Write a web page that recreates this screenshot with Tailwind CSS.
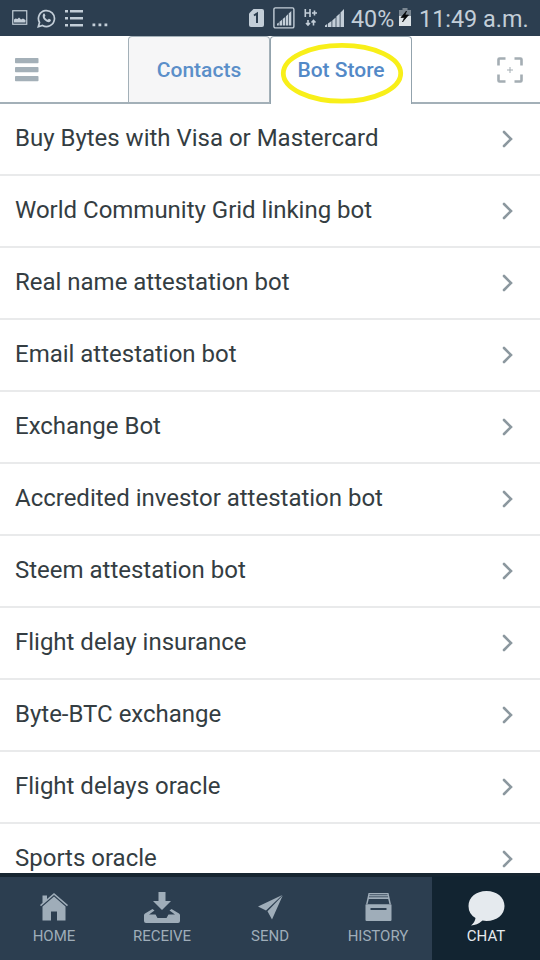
<!DOCTYPE html>
<html lang="en">
<head>
<meta charset="utf-8">
<title>Bot Store</title>
<script src="https://cdn.jsdelivr.net/npm/@tailwindcss/browser@4"></script>
</head>
<body class="bg-white">
<div class="w-[540px] h-[960px] overflow-hidden flex flex-col bg-white font-[Roboto,sans-serif]">
  <div class="h-9 shrink-0 bg-[#2c3e50] text-[#c3ced8] flex items-center justify-between pl-3 pr-3">
    <div class="flex items-center">
      <svg class="w-4 h-4" viewBox="0 0 16 16"><rect x=".75" y=".75" width="14" height="13.5" fill="none" stroke="currentColor" stroke-width="1.2"/><path d="M2 12.500V9.500l1.500-1 2 .5 1.500-1.500 2 2 2-1 2.500 1.500v2.500z" fill="currentColor"/></svg>
      <svg class="w-[19px] h-[19px] ml-[9px]" viewBox="0 0 19 19"><path d="M1.300 17.700L2.500 13.500A8 8 0 1 1 5.500 16.500Z" fill="none" stroke="currentColor" stroke-width="1.700"/><path d="M6.200 5c.6-.7 1.300-.5 1.500 0l.7 1.600c.1.400-.5 1-.7 1.300.7 1.400 1.700 2.300 3.100 2.900.4-.3.900-1.100 1.300-1l1.700.9c.3.300 0 1.600-.8 2.100-1.200.8-3.300.2-5.200-1.500C5.900 9.600 5 7 6.200 5z" fill="currentColor"/></svg>
      <svg class="w-[18px] h-[18px] ml-[9px]" viewBox="0 0 18 18" fill="currentColor"><path d="M0 1h3v2.500H0zM5 1h13v2.500H5zM0 8h3v2.500H0zM5 8h13v2.500H5zM0 15h3v2.500H0zM5 15h13v2.500H5z"/></svg>
      <svg class="w-4 h-4 ml-[9px] mt-[2px]" viewBox="0 0 16 16" fill="currentColor"><path d="M.5 12.500h2.800v2.800H.5zM6.500 12.500h2.800v2.800H6.500zM12.500 12.500h2.800v2.800h-2.800z"/></svg>
    </div>
    <div class="flex items-center">
      <svg class="w-[15px] h-[18px]" viewBox="0 0 15 18"><path d="M4.500 0H13q2 0 2 2v14q0 2-2 2H2q-2 0-2-2V4.500z" fill="currentColor"/><path d="M5 6.500L8 4.500V14" fill="none" stroke="#2c3e50" stroke-width="2"/></svg>
      <svg class="w-[22px] h-[22px] ml-[9px]" viewBox="0 0 22 22"><rect x=".9" y=".9" width="20" height="20" rx="1.500" fill="none" stroke="currentColor" stroke-width="1.400"/><path d="M4 18.500v-1.800l1.800-1.300v3.100zM6.500 18.500v-3.700l2.500-2v5.700zM9.700 18.500v-6.400l2.500-2.200v8.600zM12.900 18.500V9.300l2.100-2v11.200zM15.700 18.500V6.500l2.600-2.500v14.500z" fill="currentColor"/></svg>
      <svg class="w-[14px] h-[18px] ml-[9px]" viewBox="0 0 14 18" fill="none" stroke="currentColor" stroke-width="1.600"><path d="M1.300 0v8M6 0v8M1.300 4H6M8 4h5M10.500 1.500v5M4 11v5M2 14l2 2 2-2M9.500 16.500v-5M7.500 13.500l2-2 2 2"/></svg>
      <svg class="w-[19px] h-[18px] ml-[7px]" viewBox="0 0 19 18" fill="currentColor"><path d="M0 18v-1.500L2.200 15v3zM3 18v-3.500L6.500 12v6zM7.300 18v-6.500L10.600 8.500V18zM11.400 18V7.500l3.300-3V18zM15.500 18V3.500L19 0v18z"/></svg>
      <span class="ml-[7px] w-[43px] text-[23.3px] leading-9 whitespace-nowrap pt-[2px]">40%</span>
      <svg class="w-[12px] h-[18px] ml-[5px] mb-[2px]" viewBox="0 0 12 18"><path d="M3.500 0h5v2H12v6H0V2h3.500z" fill="#7b8792"/><path d="M0 8h12v10H0z" fill="#dce2e6"/><path d="M7.500 3L2 9.500h3.500L3.500 14l6-7H6z" fill="#050709" stroke="#050709" stroke-width=".7"/></svg>
      <span class="ml-2 w-[109px] text-[23.4px] leading-9 whitespace-nowrap pt-[2px]">11:49 a.m.</span>
    </div>
  </div>

  <div class="h-[68px] shrink-0 flex justify-between relative">
    <div class="w-32 h-[68px] border-b-2 border-[#a3b0b8] pl-[15px] pt-[22px]">
      <svg class="w-6 h-6" viewBox="0 0 24 24" fill="#a4b0b8"><rect width="23.500" height="5.300" rx=".8"/><rect y="9" width="23.500" height="5.300" rx=".8"/><rect y="18" width="23.500" height="5.300" rx=".8"/></svg>
    </div>
    <div class="w-[142px] h-[68px] border border-b-2 border-[#a3b0b8] rounded-t-[4px] bg-[#f6f6f7] text-center text-[21px] font-medium leading-[66px] text-[#5b8fc9]"><span>Contacts</span></div>
    <div class="w-[142px] h-[68px] border border-b-0 border-[#93a3ad] rounded-t-[4px] text-center text-[21px] font-medium leading-[66px] text-[#5389c7]"><span>Bot Store</span></div>
    <div class="w-32 h-[68px] border-b-2 border-[#a3b0b8] pl-[85px] pt-[21px]">
      <svg class="w-[26px] h-[26px]" viewBox="0 0 26 26" fill="none" stroke="#a4adb3"><path d="M1.500 8.500v-6q0-1 1-1h6M17.500 1.500h6q1 0 1 1v6M24.500 17.500v6q0 1-1 1h-6M8.500 24.500h-6q-1 0-1-1v-6" stroke-width="2.600"/><path d="M13 10v6M10 13h6"/></svg>
    </div>
    <svg class="absolute left-[280px] top-[5px] w-[125px] h-[64px]" viewBox="0 0 125 64"><ellipse cx="62" cy="32.300" rx="58.700" ry="27.900" fill="none" stroke="#f8ef19" stroke-width="4.800"/></svg>
  </div>

  <div id="list" class="flex-1 min-h-0 overflow-hidden text-[24px] tracking-[-0.01px] text-[#343d42]"></div>

  <div class="h-[87px] shrink-0 bg-[#2c3e50] border-t-4 border-[#172631] flex text-[15px] leading-5 text-[#9fadb9] text-center">
    <div class="w-[108px] pt-4 flex flex-col items-center">
      <svg class="w-[28px] h-[28px]" viewBox="0 0 28 28" fill="currentColor"><path d="M2.500 2.500H7v4L2.500 10.500zM14 3.500L25.500 13.500V27.500H17v-9h-6v9H2.500V13.500zM14 0l14 12-1 1.200L14 1.900 1 13.200 0 12z"/></svg>
      <span class="mt-[5px]">HOME</span>
    </div>
    <div class="w-[108px] pt-[15px] flex flex-col items-center">
      <svg class="w-9 h-[31px]" viewBox="0 0 36 31" fill="currentColor"><path d="M14.500 0h7v9H27l-9 9-9-9h5.500zM8.500 17l2 1.500L5 22.500h6.500l2 3.500h9l2-3.500H31l-5.500-4 2-1.500 7.500 4.500q1 .6 1 2V29q0 2-2 2H2q-2 0-2-2v-5.500q0-1.400 1-2z"/></svg>
      <span class="mt-[3px]">RECEIVE</span>
    </div>
    <div class="w-[108px] pt-[18px] flex flex-col items-center">
      <svg class="w-[25px] h-[25px]" viewBox="0 0 25 25" fill="currentColor"><path d="M24.300 0L0 11.500l8 4zM24.700.5L9.500 16.300 14 24.500z"/></svg>
      <span class="mt-[6px]">SEND</span>
    </div>
    <div class="w-[108px] pt-4 flex flex-col items-center">
      <svg class="w-[27px] h-[28px]" viewBox="0 0 27 28" fill="currentColor"><path d="M3.500 0h20L26 11.500H1z"/><path d="M4.500 1.700h18M4 3.800h19" stroke="#2c3e50" stroke-width=".8"/><path d="M3.800 6h19.400l1.200 5H2.600z" fill="#2c3e50"/><path d="M.5 11.500h26V27q0 1-1 1h-24q-1 0-1-1z"/><path d="M5.500 15h16v2h-16z" fill="#2c3e50"/></svg>
      <span class="mt-[5px]">HISTORY</span>
    </div>
    <div class="w-[108px] -mt-px pt-[15px] flex flex-col items-center bg-[#122431] text-[#e5eaee]">
      <svg class="w-[37px] h-[35px]" viewBox="0 0 37 35" fill="currentColor"><path d="M18.500 0C29 0 36.500 6.500 36.500 15s-7.500 15-18 15q-2 0-4-.4Q9 34.500 3 34.500q4-3.500 4.500-7.500Q.5 23 .5 15C.5 6.500 8 0 18.500 0z"/></svg>
      <span>CHAT</span>
    </div>
  </div>
</div>
<script>
const bots = ["Buy Bytes with Visa or Mastercard","World Community Grid linking bot","Real name attestation bot","Email attestation bot","Exchange Bot","Accredited investor attestation bot","Steem attestation bot","Flight delay insurance","Byte-BTC exchange","Flight delays oracle","Sports oracle"];
document.getElementById("list").innerHTML = bots.map(b => `<div class="h-[72px] border-b-2 border-[#e9eaeb] flex items-center justify-between pl-[15px] pr-[27px]"><span class="whitespace-nowrap pb-[2px]">${b}</span><svg class="w-3 h-[18px]" viewBox="0 0 12 18" fill="none" stroke="#8c989f" stroke-width="2.600" stroke-linecap="round"><path d="M3 2L10 9 3 16"/></svg></div>`).join("");
</script>
</body>
</html>
